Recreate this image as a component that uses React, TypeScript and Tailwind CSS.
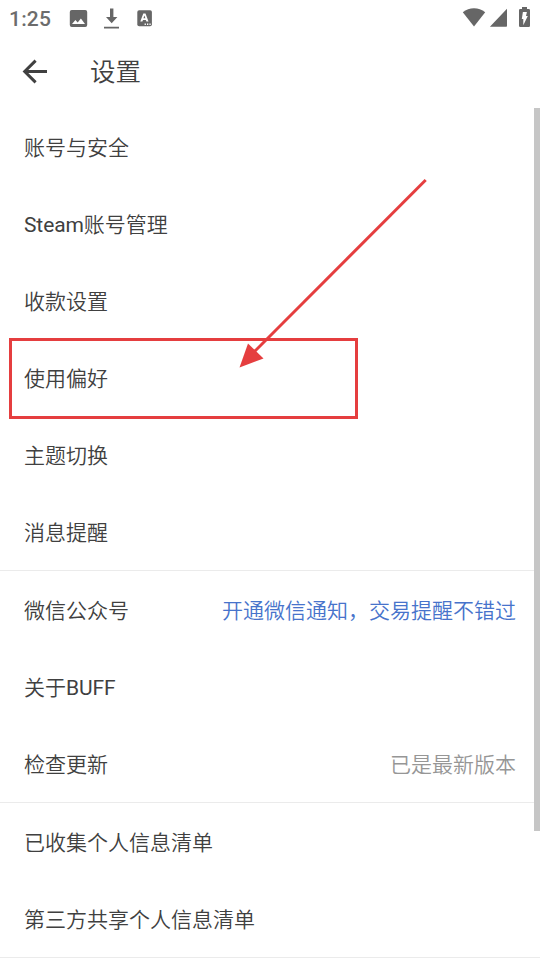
type Row = {
  label: string
  hint?: string
  hintClass?: string
}

const groups: Row[][] = [
  [
    { label: '账号与安全' },
    { label: 'Steam账号管理' },
    { label: '收款设置' },
    { label: '使用偏好' },
    { label: '主题切换' },
    { label: '消息提醒' },
  ],
  [
    { label: '微信公众号', hint: '开通微信通知，交易提醒不错过', hintClass: 'text-[#4773cb]' },
    { label: '关于BUFF' },
    { label: '检查更新', hint: '已是最新版本', hintClass: 'text-[#969696]' },
  ],
  [{ label: '已收集个人信息清单' }, { label: '第三方共享个人信息清单' }],
]

// Latin words are set a little heavier than the Chinese around them
function Label({ text }: { text: string }) {
  return (
    <span>
      {text.split(/([A-Za-z]+)/).map((part, i) =>
        i % 2 ? (
          <span key={i} className="font-normal tracking-[-0.1px]">
            {part}
          </span>
        ) : (
          part
        ),
      )}
    </span>
  )
}

function StatusBar() {
  return (
    <div className="flex h-9 items-start text-[#666666]">
      <span className="ml-[9px] mt-[7px] w-[60px] text-[21px] leading-6 font-medium tracking-[0.2px] text-[#6c6c6c]">
        1:25
      </span>

      {/* picture */}
      <svg className="mt-[9px] h-[19px] w-[19px]" viewBox="0 0 19 19">
        <path
          fill="currentColor"
          fillRule="evenodd"
          d="M2.8 .9h13.4a2 2 0 0 1 2 2v13.2a2 2 0 0 1-2 2H2.8a2 2 0 0 1-2-2V2.9a2 2 0 0 1 2-2Zm.2 14.1h13l-4.1-5.5-3.2 4.1-2.3-2.7Z"
        />
      </svg>

      {/* download */}
      <svg className="ml-[15px] mt-[8px] h-[21px] w-[17px]" viewBox="0 0 17 21" fill="currentColor">
        <path d="M7 .5h3.4V9h4L8.7 15.2 3 9h4ZM1 18.8h15v1.7H1Z" />
      </svg>

      {/* text input */}
      <svg className="ml-[17px] mt-[10px] h-[17px] w-[16px]" viewBox="0 0 16 17">
        <rect x="0.3" y="0.3" width="14.6" height="16" rx="1.8" fill="currentColor" />
        <path
          fill="#fff"
          fillRule="evenodd"
          d="M6.3 3.4h2.2l3 8.1H9.4l-.6-1.6H6l-.6 1.6H3.3Zm.1 4.9h2l-1-2.9ZM7.6 13.6h1.3v1.3H7.6Zm2.4 0h1.3v1.3H10Zm2.4 0h1.3v1.3h-1.3Z"
        />
      </svg>

      {/* wifi */}
      <svg className="ml-auto mt-[7px] h-5 w-6" viewBox="0 0 24 20" fill="currentColor">
        <path d="M.8 5.3C4 2.7 8 1.2 12 1.2s8 1.5 11.2 4.1L12 19.6Z" />
      </svg>

      {/* signal */}
      <svg className="ml-[3px] mt-[8px] h-[19px] w-[19px]" viewBox="0 0 19 19" fill="currentColor">
        <path d="M18 .8V18a.8.8 0 0 1-.8.8H.9Z" />
      </svg>

      {/* battery */}
      <svg className="mr-[9px] ml-[10px] mt-[7px] h-5 w-[13px]" viewBox="0 0 13 20">
        <path
          fill="currentColor"
          d="M4 0h5v2h1.8A1.2 1.2 0 0 1 12 3.2v15.6a1.2 1.2 0 0 1-1.2 1.2H2.2A1.2 1.2 0 0 1 1 18.8V3.2A1.2 1.2 0 0 1 2.2 2H4Z"
        />
        <path fill="#fff" d="M4.9 5h4L8 9h1.8L5.3 18.2V12H3.8Z" />
      </svg>
    </div>
  )
}

export default function App() {
  return (
    <div className="relative h-[960px] w-[540px] overflow-hidden bg-white font-[Roboto,'Noto_Sans_CJK_SC',sans-serif] text-[#404040]">
      <StatusBar />

      <header className="flex h-[72px] items-center">
        <svg className="ml-[22px] h-[26px] w-[26px]" viewBox="0 0 26 26" fill="none" stroke="currentColor" strokeWidth="3">
          <path d="M25 12.5H3M13.6 1.6L2.7 12.5l10.9 10.9" />
        </svg>
        <h1 className="ml-[42px] text-[25.5px] leading-9 font-[350]">设置</h1>
      </header>

      <main>
        {groups.map((rows, i) => (
          <section key={i} className="border-b border-[#ebebeb]">
            {rows.map((row) => (
              <div
                key={row.label}
                className="flex h-[77px] items-center justify-between px-6 pt-0.5 text-[21px] leading-8 font-[350]"
              >
                <Label text={row.label} />
                {row.hint && <span className={row.hintClass}>{row.hint}</span>}
              </div>
            ))}
          </section>
        ))}
      </main>

      {/* scrollbar */}
      <div className="absolute top-[108px] right-0 h-[723px] w-[6px] bg-[#c6c6c6]" />

      {/* highlight and pointer */}
      <div className="absolute top-[337.5px] left-[9px] h-[81px] w-[349px] border-3 border-[#e53e3f]" />
      <svg className="absolute top-[170px] left-[230px] h-[210px] w-[210px]" viewBox="230 170 210 210">
        <path d="M425.7 180L254 352" stroke="#e53e3f" strokeWidth="3" />
        <path d="M239.5 367.5L248 343.5 263.5 358.5Z" fill="#e53e3f" />
      </svg>
    </div>
  )
}
